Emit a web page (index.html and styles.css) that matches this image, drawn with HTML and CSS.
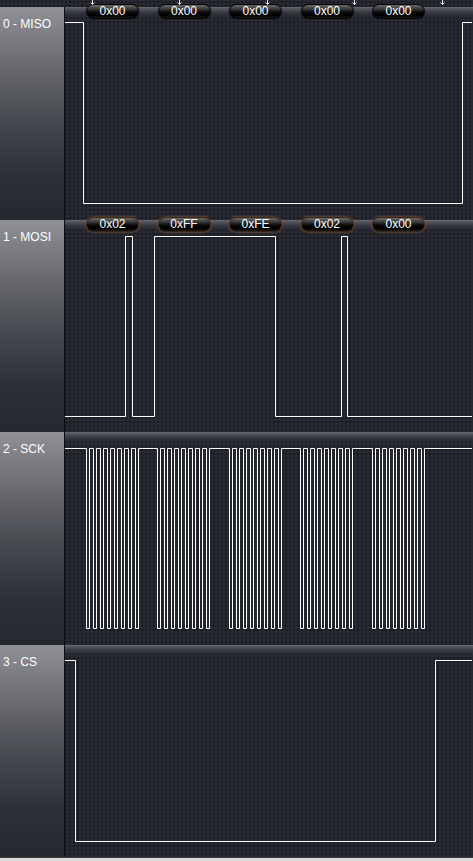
FILE: index.html
```html
<!DOCTYPE html>
<html>
<head>
<meta charset="utf-8">
<link rel="stylesheet" href="styles.css">
</head>
<body>
<div class="scope">
  <div class="topstrip">
    <svg class="markers" width="473" height="7" viewBox="0 0 473 7">
      <g stroke="#e6e6e6" stroke-width="1" fill="none">
        <path d="M92.5 0V4.5M90.5 2.5L92.5 4.5L94.5 2.5"/>
        <path d="M179.5 0V4.5M177.5 2.5L179.5 4.5L181.5 2.5"/>
        <path d="M267.5 0V4.5M265.5 2.5L267.5 4.5L269.5 2.5"/>
        <path d="M354.5 0V4.5M352.5 2.5L354.5 4.5L356.5 2.5"/>
        <path d="M442.5 0V4.5M440.5 2.5L442.5 4.5L444.5 2.5"/>
      </g>
    </svg>
  </div>

  <div class="channel ch-a">
    <div class="label">0 - MISO</div>
    <div class="plot">
      <svg class="wave" width="407" height="213">
        <path d="M0 15.5H18.5V196.5H397.5V15.5H407"/>
      </svg>
      <div class="badge b1">0x00</div>
      <div class="badge b2">0x00</div>
      <div class="badge b3">0x00</div>
      <div class="badge b4">0x00</div>
      <div class="badge b5">0x00</div>
    </div>
  </div>

  <div class="channel ch-b">
    <div class="label">1 - MOSI</div>
    <div class="plot">
      <svg class="wave" width="407" height="212">
        <path d="M0 196.5H60.5V16.5H67.5V196.5H89.5V16.5H210.5V196.5H276.5V16.5H282.5V196.5H407"/>
      </svg>
      <div class="badge warm b1">0x02</div>
      <div class="badge warm b2">0xFF</div>
      <div class="badge warm b3">0xFE</div>
      <div class="badge warm b4">0x02</div>
      <div class="badge warm b5">0x00</div>
    </div>
  </div>

  <div class="channel ch-a">
    <div class="label">2 - SCK</div>
    <div class="plot">
      <svg class="wave" width="407" height="213">
        <path d="M0 16.5H21.5v180h3v-180h4v180h3v-180h4v180h3v-180h4v180h3v-180h4v180h3v-180h4v180h3v-180h4v180h3v-180h4v180h3v-180H92.5v180h3v-180h4v180h3v-180h4v180h3v-180h4v180h3v-180h4v180h3v-180h4v180h3v-180h4v180h3v-180h4v180h3v-180H164.5v180h3v-180h4v180h3v-180h4v180h3v-180h4v180h3v-180h4v180h3v-180h4v180h3v-180h4v180h3v-180h4v180h3v-180H235.5v180h3v-180h4v180h3v-180h4v180h3v-180h4v180h3v-180h4v180h3v-180h4v180h3v-180h4v180h3v-180h4v180h3v-180H307.5v180h3v-180h4v180h3v-180h4v180h3v-180h4v180h3v-180h4v180h3v-180h4v180h3v-180h4v180h3v-180h4v180h3v-180H407"/>
      </svg>
    </div>
  </div>

  <div class="channel ch-b">
    <div class="label">3 - CS</div>
    <div class="plot">
      <svg class="wave" width="407" height="212">
        <path d="M0 15.5H10.5V196.5H370.5V15.5H407"/>
      </svg>
    </div>
  </div>

  <div class="bottomstrip"></div>
</div>
</body>
</html>
```

FILE: styles.css
```css
html, body {
  margin: 0;
  padding: 0;
  background: #20222a;
}

.scope {
  width: 473px;
  height: 861px;
  display: flex;
  flex-direction: column;
  overflow: hidden;
  font-family: "Liberation Sans", "DejaVu Sans", sans-serif;
  background-color: #262832;
  background-image: radial-gradient(circle, #17191f 0.7px, transparent 1px);
  background-size: 4px 4px;
}

.topstrip {
  height: 7px;
  flex: none;
  position: relative;
  z-index: 2;
}

.markers {
  display: block;
}

.channel {
  display: flex;
  flex: none;
}

.ch-a {
  height: 213px;
}

.ch-b {
  height: 212px;
}

.label {
  width: 65px;
  flex: none;
  box-sizing: border-box;
  padding: 10px 0 0 3px;
  color: #ffffff;
  font-size: 12px;
  line-height: 14px;
  white-space: nowrap;
  border-right: 1px solid #0c0d11;
  background: linear-gradient(to bottom, #8f9196 0%, #7e8085 12%, #62646a 32%, #45474e 55%, #2e3037 78%, #262830 100%);
}

.plot {
  position: relative;
  flex: 1;
  background-image: linear-gradient(to bottom, #6a6c72 0px, #50525a 2px, #3a3c44 5px, rgba(42, 44, 54, 0.6) 9px, rgba(38, 40, 50, 0) 13px);
}

.wave {
  display: block;
  overflow: visible;
}

.wave path {
  fill: none;
  stroke: #ffffff;
  stroke-width: 1;
}

.badge {
  position: absolute;
  top: -3px;
  width: 53px;
  height: 15px;
  box-sizing: border-box;
  border-radius: 8px;
  border: 1px solid #050505;
  background: linear-gradient(to bottom, #6a6a6a 0%, #3a3a3a 30%, #0a0a0a 55%, #000000 80%, #1a1a1a 100%);
  color: #ffffff;
  font-size: 12px;
  line-height: 13px;
  text-align: center;
  box-shadow: 0 0 1px rgba(0, 0, 0, 0.8);
}

.badge.warm {
  border-color: #3c2716;
  box-shadow: 0 0 2px 1px rgba(140, 90, 50, 0.55);
}

.b1 { left: 21px; }
.b2 { left: 92.5px; }
.b3 { left: 164px; }
.b4 { left: 235.5px; }
.b5 { left: 307px; }

.bottomstrip {
  flex: 1;
  background: #dcdcdc;
  border-top: 1px solid #3a3c44;
}
```
